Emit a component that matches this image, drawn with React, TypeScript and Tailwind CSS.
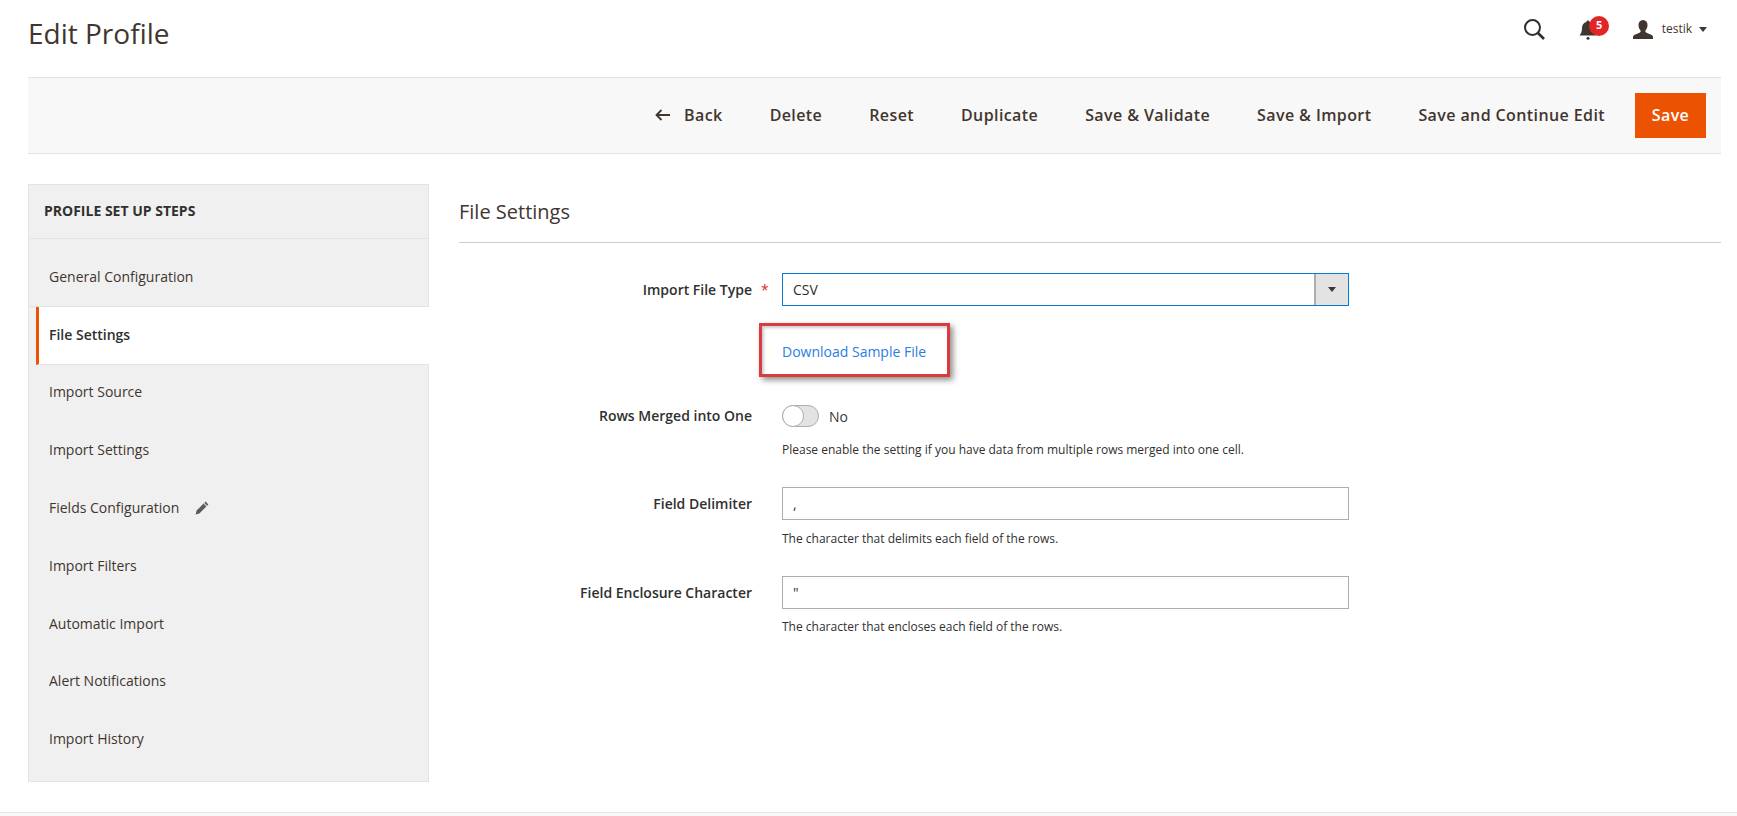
import React from "react";

const font = { fontFamily: '"Open Sans", sans-serif' };

function Search() {
  return (
    <svg width="24" height="24" viewBox="0 0 24 24" className="block">
      <circle cx="10.5" cy="10.5" r="7.5" fill="none" stroke="#303030" strokeWidth="2" />
      <path d="M16 16l6 6" stroke="#303030" strokeWidth="2.6" fill="none" />
    </svg>
  );
}

function Bell() {
  return (
    <svg width="18" height="20" viewBox="0 0 18 20" className="block">
      <path d="M9 0.5c1 0 1.6.7 1.6 1.5 3 .7 4.4 3 4.4 6 0 4 1 5.400 2.500 7.500H.5C2 13.400 3 12 3 8c0-3 1.400-5.300 4.400-6C7.400 1.200 8 .5 9 .5z" fill="#41362f" />
      <circle cx="9" cy="18.300" r="1.500" fill="#41362f" />
    </svg>
  );
}

function User() {
  return (
    <svg width="20" height="19" viewBox="0 0 20 19" className="block">
      <path d="M10 0c3 0 4.500 2.200 4.500 5.200 0 2.200-.9 4.200-2.100 5.200-.3 1.300.2 2 1.600 2.600 2.400 1 5.300 1.800 6 3.400V19H0v-2.600c.7-1.600 3.600-2.400 6-3.400 1.400-.6 1.900-1.300 1.600-2.600C6.400 9.400 5.500 7.400 5.500 5.200 5.500 2.200 7 0 10 0z" fill="#41362f" />
    </svg>
  );
}

function Pencil() {
  return (
    <svg width="14" height="14" viewBox="0 0 14 14" className="block">
      <path d="M10.600.6l2.800 2.800-1.300 1.300-2.800-2.800zM8.600 2.600l2.800 2.800-7 7L.6 13.400l1-3.800z" fill="#5f5a57" />
    </svg>
  );
}

function BackArrow() {
  return (
    <svg width="15" height="12" viewBox="0 0 15 12" className="block">
      <path d="M6.500 1L1.500 6l5 5M2 6h13" fill="none" stroke="#41362f" strokeWidth="1.800" />
    </svg>
  );
}

const toolbarItems = ["Delete", "Reset", "Duplicate", "Save & Validate", "Save & Import", "Save and Continue Edit"];

const steps = [
  "General Configuration",
  "File Settings",
  "Import Source",
  "Import Settings",
  "Fields Configuration",
  "Import Filters",
  "Automatic Import",
  "Alert Notifications",
  "Import History",
];

function Label({ children, required }: { children: React.ReactNode; required?: boolean }) {
  return (
    <div className="flex w-[323px] shrink-0 justify-end pr-[30px]">
      <span className="relative text-sm font-semibold text-[#303030] leading-[33px] whitespace-nowrap">
        {children}
        {required && <span className="absolute left-[calc(100%+9px)] top-0 text-[#e22626] font-normal">*</span>}
      </span>
    </div>
  );
}

export default function App() {
  return (
    <div style={font} className="relative h-[816px] w-[1737px] overflow-hidden bg-white text-[#303030]">
      <header className="flex h-[77px] items-start justify-between pl-[28px] pr-[30px]">
        <h1 className="mt-[13px] text-[28px] leading-[40px] font-normal text-[#41362f]">Edit Profile</h1>
        <div className="mt-[17px] flex items-center">
          <Search />
          <div className="relative ml-[33px] mt-[1px] mr-[36px]">
            <Bell />
            <span className="absolute left-[10.500px] top-[-4px] flex h-[20px] w-[20px] items-center justify-center rounded-full bg-[#e22626] text-[11px] font-bold text-white">5</span>
          </div>
          <User />
          <span className="ml-[9px] text-xs leading-[18px] text-[#41362f]">testik</span>
          <span className="ml-[7px] h-0 w-0 border-x-[4px] border-t-[5px] border-x-transparent border-t-[#41362f]" />
        </div>
      </header>

      <div className="mx-[28px] mr-[16px] flex h-[77px] items-center justify-end border-y border-[#e3e3e3] bg-[#f8f8f8] pr-[15px]">
        <div className="flex items-center gap-[47px] pb-[2px] text-base font-semibold tracking-[0.025em] text-[#41362f]">
          <span className="flex items-center gap-[14px]">
            <BackArrow />
            Back
          </span>
          {toolbarItems.map((t) => (
            <span key={t} className="whitespace-nowrap">{t}</span>
          ))}
        </div>
        <button className="ml-[30px] h-[45px] w-[71px] bg-[#eb5202] pb-[2px] text-base font-semibold tracking-[0.025em] text-white">Save</button>
      </div>

      <div className="mt-[30px] flex pl-[28px] pr-[16px]">
        <aside className="relative h-[598px] w-[401px] shrink-0 border border-[#e3e3e3] bg-[#f0f0f0]">
          <div className="flex h-[54px] items-center border-b border-[#e3e3e3] pb-[2px] pl-[15px] text-sm font-bold text-[#303030]">PROFILE SET UP STEPS</div>
          <div className="pt-[10px]">
            {steps.map((s) => {
              const active = s === "File Settings";
              const first = s === "General Configuration";
              return active ? (
                <div key={s} className="relative z-10 ml-[7px] mr-[-1px] flex h-[58px] items-center border-b border-[#e3e3e3] border-l-[3px] border-l-[#eb5202] bg-white pb-[2px] pl-[10px] text-sm font-semibold text-[#303030]">
                  {s}
                </div>
              ) : (
                <div key={s} className={`flex items-center gap-[16px] pl-[20px] text-sm text-[#41362f] ${first ? "h-[58px] border-b border-[#e3e3e3] pb-[2px]" : "h-[57.800px] pb-[3px]"}`}>
                  {s}
                  {s === "Fields Configuration" && <Pencil />}
                </div>
              );
            })}
          </div>
        </aside>

        <main className="ml-[30px] flex-1">
          <h2 className="flex h-[59px] items-center border-b border-[#cccccc] pb-[3px] text-xl font-normal text-[#41362f]">File Settings</h2>

          <div className="mt-[30px] flex">
            <Label required>Import File Type</Label>
            <div className="flex h-[33px] w-[567px] items-stretch border border-[#007bdb] bg-white">
              <span className="flex-1 pl-[10px] text-sm leading-[31px]">CSV</span>
              <span className="flex w-[34px] items-center justify-center border-l-2 border-[#adadad] bg-[#e3e3e3]">
                <span className="h-0 w-0 border-x-[4px] border-t-[5px] border-x-transparent border-t-[#41362f]" />
              </span>
            </div>
          </div>

          <div className="mt-[17px] ml-[300px] flex h-[54px] w-[191px] items-center border-[3px] border-[#db3b3f] pl-[20px] pt-[4px] shadow-[3px_3px_6px_rgba(0,0,0,0.45),inset_2px_2px_3px_rgba(0,0,0,0.2)]">
            <a className="whitespace-nowrap text-sm text-[#2a7de1]">Download Sample File</a>
          </div>

          <div className="mt-[22px] flex">
            <Label>Rows Merged into One</Label>
            <div className="flex h-[33px] items-start">
              <span className="relative mt-[6px] block h-[22px] w-[37px] rounded-full border border-[#adadad] bg-[#e3e3e3]">
                <span className="absolute left-[-1px] top-[-1px] block h-[22px] w-[22px] rounded-full border border-[#adadad] bg-white" />
              </span>
              <span className="ml-[10px] mt-[1px] text-sm leading-[33px] text-[#41362f]">No</span>
            </div>
          </div>
          <p className="ml-[323px] mt-[9px] text-xs leading-[18px] text-[#303030]">Please enable the setting if you have data from multiple rows merged into one cell.</p>

          <div className="mt-[28px] flex">
            <Label>Field Delimiter</Label>
            <div className="h-[33px] w-[567px] border border-[#adadad] pl-[10px] text-sm leading-[31px]">,</div>
          </div>
          <p className="ml-[323px] mt-[10px] text-xs leading-[18px] text-[#303030]">The character that delimits each field of the rows.</p>

          <div className="mt-[28px] flex">
            <Label>Field Enclosure Character</Label>
            <div className="h-[33px] w-[567px] border border-[#adadad] pl-[10px] text-sm leading-[31px]">"</div>
          </div>
          <p className="ml-[323px] mt-[9px] text-xs leading-[18px] text-[#303030]">The character that encloses each field of the rows.</p>
        </main>
      </div>

      <div className="absolute inset-x-0 top-[812px] h-[4px] border-t border-[#e3e3e3] bg-[#f8f8f8]" />
    </div>
  );
}
